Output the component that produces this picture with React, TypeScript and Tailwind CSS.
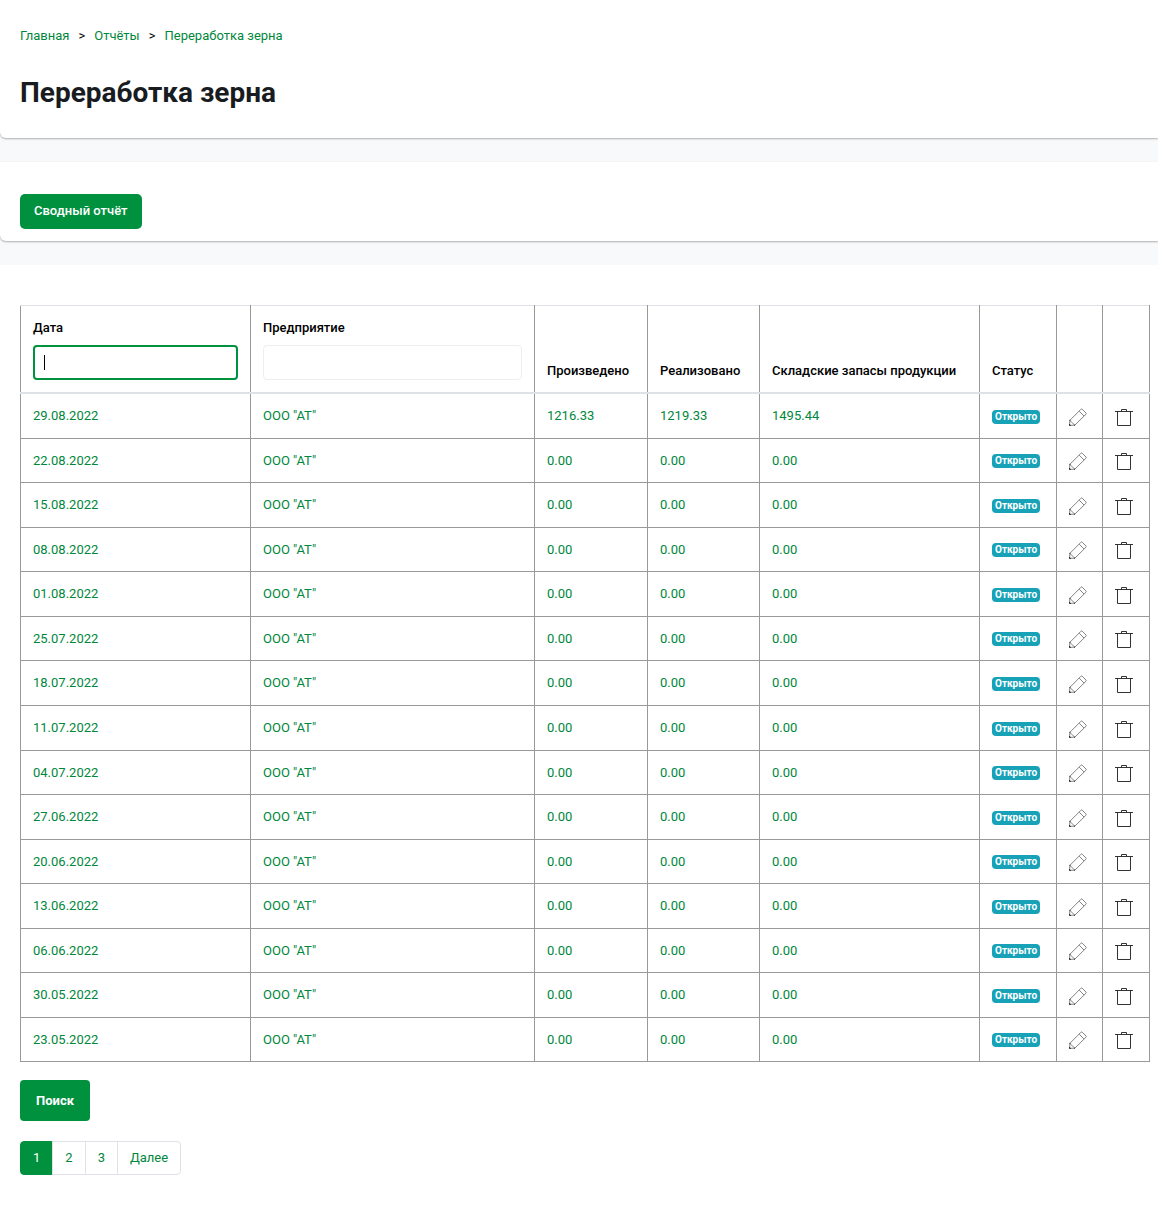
import React from "react";

const rows = [
  { date: "29.08.2022", produced: "1216.33", sold: "1219.33", stock: "1495.44" },
  { date: "22.08.2022", produced: "0.00", sold: "0.00", stock: "0.00" },
  { date: "15.08.2022", produced: "0.00", sold: "0.00", stock: "0.00" },
  { date: "08.08.2022", produced: "0.00", sold: "0.00", stock: "0.00" },
  { date: "01.08.2022", produced: "0.00", sold: "0.00", stock: "0.00" },
  { date: "25.07.2022", produced: "0.00", sold: "0.00", stock: "0.00" },
  { date: "18.07.2022", produced: "0.00", sold: "0.00", stock: "0.00" },
  { date: "11.07.2022", produced: "0.00", sold: "0.00", stock: "0.00" },
  { date: "04.07.2022", produced: "0.00", sold: "0.00", stock: "0.00" },
  { date: "27.06.2022", produced: "0.00", sold: "0.00", stock: "0.00" },
  { date: "20.06.2022", produced: "0.00", sold: "0.00", stock: "0.00" },
  { date: "13.06.2022", produced: "0.00", sold: "0.00", stock: "0.00" },
  { date: "06.06.2022", produced: "0.00", sold: "0.00", stock: "0.00" },
  { date: "30.05.2022", produced: "0.00", sold: "0.00", stock: "0.00" },
  { date: "23.05.2022", produced: "0.00", sold: "0.00", stock: "0.00" },
];

const th =
  "border-x border-x-[#999] border-t border-t-[#dee2e6] border-b-2 border-b-[#dee2e6] p-3 text-left align-bottom font-medium";
const td = "border border-[#999] p-3 align-top";
const pageLink = "border border-[#dee2e6] -ml-px px-3 py-[6px] text-[#00873c]";

const PencilIcon = () => (
  <svg
    className="inline-block h-[18px] w-[18px] align-middle"
    viewBox="0 0 18 18"
    fill="none"
    stroke="#777"
    strokeWidth="0.9"
    strokeLinejoin="round"
    aria-hidden="true"
  >
    <path d="M0.6 17.3 L0.8 12.4 L12 1.2 Q12.6 0.6 13.2 1.2 L17 5 Q17.6 5.6 17 6.2 L5.8 17.2 Z" />
    <path d="M0.8 12.4 L5.8 17.2 M10.2 3.2 L15 8" />
    <path d="M0.5 16.2 V17.4 H1.8 M0.6 12.4 H1.4 M5.2 17.2 H6" stroke="#111" />
  </svg>
);

const TrashIcon = () => (
  <svg
    className="inline-block h-[18px] w-[18px] align-middle"
    viewBox="0 0 18 18"
    fill="none"
    stroke="#333"
    strokeWidth="1"
    aria-hidden="true"
  >
    <path d="M0 3.5 H18 M2.5 3.5 V17.5 H15.5 V3.5 M6.5 3.5 V1.5 H11.5 V3.5" />
  </svg>
);

const ReportTable = () => {
  return (
    <table className="w-full border-collapse">
      <thead className="text-black">
        <tr>
          <th className={`${th} w-[230px]`}>
            <label htmlFor="date" className="mb-2 block">
              Дата
            </label>
            <div className="relative">
              <input
                id="date"
                type="text"
                autoFocus
                className="block h-[35px] w-full rounded border-2 border-[#00913f] px-[9px] text-base font-normal caret-transparent outline-none"
              />
              {/* Text cursor */}
              <span className="absolute top-[10px] left-[11px] h-[15px] w-px bg-black"></span>
            </div>
          </th>
          <th className={th}>
            <label htmlFor="company" className="mb-2 block">
              Предприятие
            </label>
            <input
              id="company"
              type="text"
              className="block h-[35px] w-full rounded-sm border border-[#eceef0] px-[10px] text-base font-normal outline-none"
            />
          </th>
          <th className={`${th} w-[113px]`}>Произведено</th>
          <th className={`${th} w-[112px]`}>Реализовано</th>
          <th className={`${th} w-[220px]`}>Складские запасы продукции</th>
          <th className={`${th} w-[77px]`}>Статус</th>
          <th className={`${th} w-[46px]`}></th>
          <th className={`${th} w-[47px]`}></th>
        </tr>
      </thead>
      <tbody className="text-[#00873c]">
        {rows.map((row) => (
          <tr key={row.date}>
            <td className={td}>
              <a href="#">{row.date}</a>
            </td>
            <td className={td}>
              <a href="#">ООО "АТ"</a>
            </td>
            <td className={td}>
              <a href="#">{row.produced}</a>
            </td>
            <td className={td}>
              <a href="#">{row.sold}</a>
            </td>
            <td className={td}>
              <a href="#">{row.stock}</a>
            </td>
            <td className={td}>
              <span className="inline-block rounded bg-[#17a2b8] px-[3px] py-[2px] align-middle text-[10px] leading-[10px] font-bold text-white">
                Открыто
              </span>
            </td>
            <td className={td}>
              <a href="#" aria-label="Редактировать">
                <PencilIcon />
              </a>
            </td>
            <td className={td}>
              <a href="#" aria-label="Удалить">
                <TrashIcon />
              </a>
            </td>
          </tr>
        ))}
      </tbody>
    </table>
  );
};

const App = () => {
  return (
    <div className="min-h-screen bg-[#f7f9fb] font-['Roboto','Liberation_Sans',sans-serif] text-[13px] leading-normal text-[#212529]">
      {/* Breadcrumbs and title */}
      <header className="mb-6 rounded-bl-md bg-white px-5 pt-[26px] pb-[27px] shadow-[0_1px_2px_rgba(0,0,0,0.3)]">
        <nav className="flex gap-[9px] text-[#00873c]">
          <a href="#">Главная</a>
          <span className="text-black">&gt;</span>
          <a href="#">Отчёты</a>
          <span className="text-black">&gt;</span>
          <a href="#">Переработка зерна</a>
        </nav>
        <h1 className="mt-[29px] text-[28px] leading-9 font-bold text-[#181c21]">
          Переработка зерна
        </h1>
      </header>

      {/* Actions */}
      <section className="mb-6 rounded-bl-md bg-white px-5 pt-8 pb-3 shadow-[0_1px_2px_rgba(0,0,0,0.3)]">
        <button className="block h-[35px] rounded-[5px] bg-[#00913f] px-[14px] font-medium text-white">
          Сводный отчёт
        </button>
      </section>

      {/* Report list */}
      <main className="bg-white pt-10 pr-2 pb-14 pl-5">
        <ReportTable />
        <button className="mt-[18px] block h-[41px] rounded bg-[#00913f] px-4 font-bold text-white">
          Поиск
        </button>
        <nav className="mt-5 flex">
          <a
            href="#"
            className="rounded-l border border-[#00913f] bg-[#00913f] px-3 py-[6px] text-white"
          >
            1
          </a>
          <a href="#" className={pageLink}>
            2
          </a>
          <a href="#" className={pageLink}>
            3
          </a>
          <a href="#" className={`${pageLink} rounded-r`}>
            Далее
          </a>
        </nav>
      </main>
    </div>
  );
};

export default App;
